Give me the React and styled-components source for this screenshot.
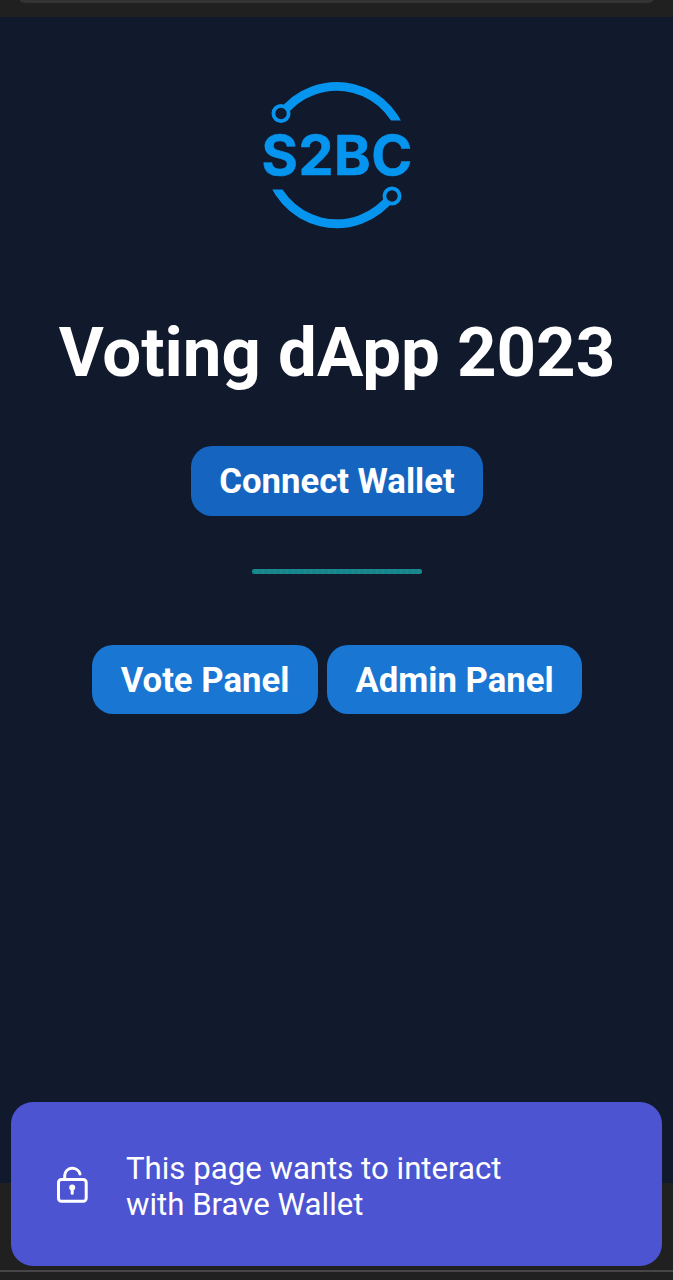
import React from "react";
import styled, { createGlobalStyle } from "styled-components";

const GlobalStyle = createGlobalStyle`
  * { box-sizing: border-box; }
  body {
    margin: 0;
    background: #202020;
    font-family: Roboto, "Liberation Sans", sans-serif;
  }
`;

const Screen = styled.div`
  position: relative;
  display: flex;
  flex-direction: column;
  width: 673px;
  height: 1280px;
  overflow: hidden;
  background: #202020;
`;

const BrowserBar = styled.div`
  flex: none;
  height: 17px;
  padding: 0 20px;
`;

const AddressEdge = styled.div`
  height: 2.5px;
  background: #343434;
  border-radius: 0 0 6px 6px / 0 0 2.5px 2.5px;
`;

const Page = styled.main`
  flex: none;
  display: flex;
  flex-direction: column;
  align-items: center;
  height: 1166px;
  padding-top: 58px;
  background: #11192c;
`;

const Logo = styled.svg`
  display: block;
  width: 160px;
  height: 160px;
`;

const Title = styled.h1`
  margin: 77px 0 0;
  padding-left: 1px;
  font-size: 69px;
  line-height: 82px;
  font-weight: 700;
  color: #fff;
  white-space: nowrap;
`;

const Button = styled.button`
  width: ${(p) => p.$width}px;
  height: 69.5px;
  padding: 0 0 0 1px;
  border: 0;
  border-radius: 21px;
  background: ${(p) => (p.$primary ? "#1565c0" : "#1976d2")};
  color: #fff;
  font: 700 34.7px/69px Roboto, "Liberation Sans", sans-serif;
  white-space: nowrap;
`;

const ConnectRow = styled.div`
  display: flex;
  margin-top: 52.4px;
`;

const Divider = styled.hr`
  width: 170px;
  height: 5px;
  margin: 53.1px 0 0;
  border: 0;
  border-radius: 2px;
  background: repeating-linear-gradient(90deg, #12878d 0 4px, #24868d 4px 6px);
`;

const PanelRow = styled.nav`
  display: flex;
  gap: 9px;
  margin-top: 71px;
`;

const PanelButton = styled(Button)`
  padding-top: 1px;
`;

const BottomBar = styled.div`
  flex: 1;
  display: flex;
  align-items: flex-end;
  padding-bottom: 8px;
`;

const BottomLine = styled.div`
  width: 100%;
  height: 2px;
  background: #474548;
`;

const WalletNotice = styled.aside`
  position: absolute;
  left: 11px;
  right: 11px;
  bottom: 14px;
  display: flex;
  align-items: center;
  height: 164px;
  padding: 0 44px;
  border-radius: 22px;
  background: #4c54d2;
  color: #fff;
`;

const LockIcon = styled.svg`
  flex: none;
  width: 36px;
  height: 40px;
  margin-right: 35px;
`;

const NoticeText = styled.p`
  margin: 5px 0 0;
  font-size: 31.2px;
  line-height: 36px;
`;

export default function App() {
  return (
    <Screen>
      <GlobalStyle />
      <BrowserBar>
        <AddressEdge />
      </BrowserBar>
      <Page>
        <Logo viewBox="257 75 160 160" role="img" aria-label="S2BC">
          <clipPath id="arcs">
            <path d="M257 75H417V120.4H257ZM257 189.4H417V235H257Z" />
          </clipPath>
          <g fill="none" stroke="#0695ee">
            <g clipPath="url(#arcs)" strokeWidth="8.8">
              <path d="M281 115.05A68.6 68.6 0 0 1 404.7 146.05" />
              <path d="M392.4 195.15A68.6 68.6 0 0 1 268.7 164.15" />
            </g>
            <g fill="#11192c" strokeWidth="3.8">
              <circle cx="281" cy="113.5" r="7.6" />
              <circle cx="392" cy="196" r="7.6" />
            </g>
          </g>
          <text
            x="261.6"
            y="175.4"
            fill="#0695ee"
            stroke="#0695ee"
            strokeWidth="0.6"
            fontFamily="Inter, sans-serif"
            fontWeight="700"
            fontSize="55.5"
            textLength="150.6"
          >
            S2BC
          </text>
        </Logo>
        <Title>Voting dApp 2023</Title>
        <ConnectRow>
          <Button $primary $width={292}>Connect Wallet</Button>
        </ConnectRow>
        <Divider />
        <PanelRow>
          <PanelButton $width={226}>Vote Panel</PanelButton>
          <PanelButton $width={255}>Admin Panel</PanelButton>
        </PanelRow>
      </Page>
      <BottomBar>
        <BottomLine />
      </BottomBar>
      <WalletNotice>
        <LockIcon viewBox="55 1164 36 40" fill="none" stroke="#fff" strokeWidth="3" strokeLinecap="round">
          <rect x="58.5" y="1179.5" width="27.7" height="21.7" rx="3" />
          <path d="M64.7 1179V1175.5A7.8 7.8 0 0 1 80 1174" />
          <circle cx="72.2" cy="1187.6" r="3" fill="#fff" stroke="none" />
          <path d="M72.2 1188V1193.3" />
        </LockIcon>
        <NoticeText>
          This page wants to interact
          <br />
          with Brave Wallet
        </NoticeText>
      </WalletNotice>
    </Screen>
  );
}
